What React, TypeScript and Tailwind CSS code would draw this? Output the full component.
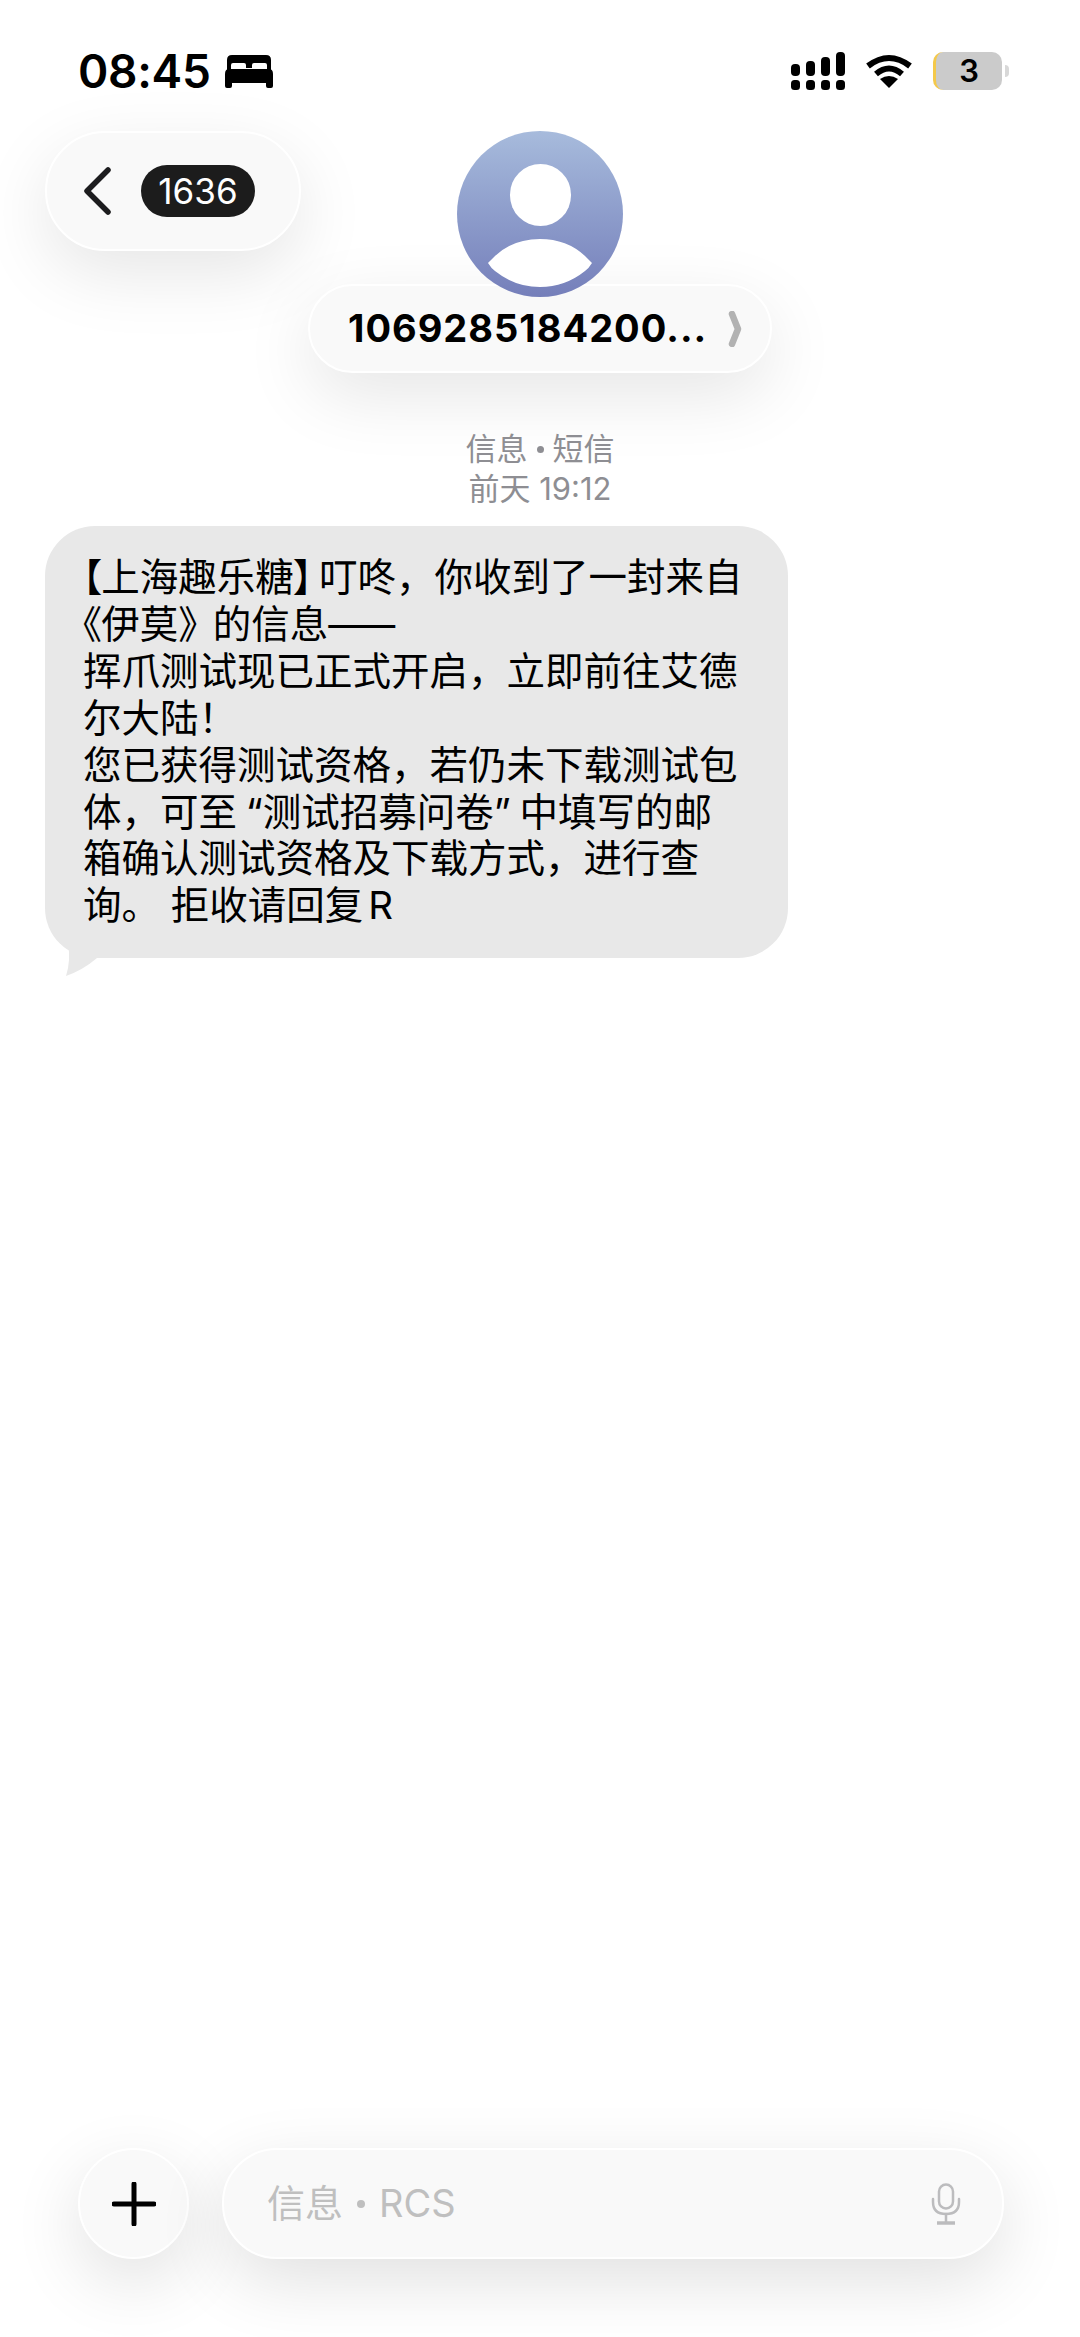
const latin = "font-['Inter','Noto_Sans_CJK_SC','Liberation_Sans',sans-serif]";
const cjk = "font-['Inter','Noto_Sans_CJK_SC',sans-serif]";
const palt = "[font-feature-settings:'palt']";

function Bed() {
  return (
    <svg width="48" height="33" viewBox="0 0 48 33" fill="black">
      <path fillRule="evenodd" d="M7 0H41Q46 0 46 5V15H42V10Q42 8 40 8H29Q27 8 27 10V13H21V10Q21 8 19 8H8Q6 8 6 10V15H2V5Q2 0 7 0Z" />
      <path d="M4 14H44Q48 14 48 19V31Q48 33 46 33H43Q41 33 41 31V28H7V31Q7 33 5 33H2Q0 33 0 31V19Q0 14 4 14Z" />
    </svg>
  );
}

function Signal() {
  return (
    <svg width="54" height="38" viewBox="0 0 54 38" fill="black">
      <rect x="0" y="12" width="9" height="12" rx="4" />
      <rect x="15" y="9" width="9" height="15" rx="4" />
      <rect x="30" y="5" width="9" height="19" rx="4" />
      <rect x="45" y="0" width="9" height="24" rx="4" />
      <rect x="0" y="28" width="9" height="10" rx="3.5" />
      <rect x="15" y="28" width="9" height="10" rx="3.5" />
      <rect x="30" y="28" width="9" height="10" rx="3.5" />
      <rect x="45" y="28" width="9" height="10" rx="3.5" />
    </svg>
  );
}

function Wifi() {
  return (
    <svg width="46" height="36" viewBox="0 0 46 36" fill="none" stroke="black" strokeWidth="6">
      <path d="M2 13Q23 -3 44 13" />
      <path d="M10 21Q23 10 36 21" />
      <path d="M23 35L14 26Q23 20 32 26Z" fill="black" stroke="none" />
    </svg>
  );
}

function Mic() {
  return (
    <svg width="30" height="42" viewBox="0 0 30 42" fill="none" stroke="#bcbcbe" strokeWidth="2.5" strokeLinecap="round">
      <rect x="8" y="1.5" width="14" height="24" rx="7" />
      <path d="M2 16V19Q2 31 15 31Q28 31 28 19V16" />
      <path d="M15 31V39" />
      <path d="M6 40H24" strokeWidth="3.5" strokeLinecap="butt" />
    </svg>
  );
}

function Line({ children, className = "" }: { children: React.ReactNode; className?: string }) {
  return <div className={`text-[38.5px] leading-[46.9px] whitespace-nowrap ${className}`}>{children}</div>;
}

export default function App() {
  return (
    <div className={`w-[1080px] h-[2337px] bg-white flex flex-col overflow-hidden text-black ${latin}`}>
      <div className="mt-[52px] h-[38px] pl-[78px] pr-[78px] flex items-center justify-between">
        <div className="flex items-center gap-[14px]">
          <span className="text-[46px] leading-[38px] font-semibold tracking-[-0.3px]">08:45</span>
          <Bed />
        </div>
        <div className="flex items-center">
          <Signal />
          <div className="ml-[21px]"><Wifi /></div>
          <div className="ml-[21px] relative w-[69px] h-[38px] rounded-[10px] bg-[#cbcbcb] border-l-[3px] border-[#f4c94a] flex items-center justify-center text-[31px] font-semibold">
            3
            <div className="absolute right-[-7px] top-[13px] w-[4px] h-[12px] rounded-r-[4px] bg-[#d8d8d8]" />
          </div>
        </div>
      </div>

      <div className="mt-[41px] grid grid-cols-[1fr_auto_1fr]">
        <div className="pl-[45px]">
          <div className="w-[256px] h-[120px] rounded-[60px] bg-[#f9f9f9] border-2 border-white shadow-[0_22px_70px_rgba(0,0,0,0.1)] flex items-center pl-[36px]">
            <svg width="30" height="48" viewBox="0 0 30 48" fill="none" stroke="#1c1c1e" strokeWidth="5.5" strokeLinecap="round" strokeLinejoin="round">
              <path d="M25 3L4 24L25 45" />
            </svg>
            <div className="ml-[28px] w-[114px] h-[52px] rounded-[26px] bg-[#1c1c1c] text-white text-[35px] flex items-center justify-center">1636</div>
          </div>
        </div>
        <div className="flex flex-col items-center">
          <div className="relative z-10 w-[166px] h-[166px] rounded-full bg-gradient-to-b from-[#a7bbdc] to-[#757fba] flex flex-col items-center overflow-hidden">
            <div className="mt-[33px] w-[61px] h-[62px] rounded-full bg-white" />
            <svg className="mt-[13px]" width="106" height="48" viewBox="0 0 106 48" fill="white">
              <path d="M1 24Q4 21 8 17Q26 0 53 0Q80 0 98 17Q102 21 105 24Q102 29 98 32Q78 48 53 48Q28 48 8 32Q4 29 1 24Z" />
            </svg>
          </div>
          <div className="-mt-[13px] w-[464px] h-[89px] rounded-[45px] bg-[#f9f9f9] border-2 border-white shadow-[0_22px_70px_rgba(0,0,0,0.1)] flex items-center pl-[38px]">
            <span className="w-[380px] text-[38px] font-bold tracking-[1px] whitespace-nowrap">1069285184200...</span>
            <svg width="14" height="36" viewBox="0 0 14 36" fill="none" stroke="#b2b2b2" strokeWidth="6.5" strokeLinecap="round" strokeLinejoin="round">
              <path d="M4 3L10 18L4 33" />
            </svg>
          </div>
        </div>
        <div />
      </div>

      <div className={`mt-[56px] flex flex-col items-center text-[31px] leading-[40px] text-[#8e8e93] ${cjk}`}>
        <span className="flex items-center">信息<span className="mx-[9px] w-[7px] h-[7px] rounded-full bg-[#8e8e93]" />短信</span>
        <span>前天 19:12</span>
      </div>

      <div className="mt-[17px] ml-[45px] relative w-[743px] pt-[28px] pb-[29px] pl-[38px] rounded-[50px] bg-[#e8e8e8]">
        <Line className="-ml-[1px]"><span className={palt}>【</span>上海趣乐糖<span className={`${palt} mr-[6px]`}>】</span>叮咚，你收到了一封来自</Line>
        <Line className="-ml-[1px]"><span className={palt}>《</span>伊莫<span className="tracking-[-4px]">》</span>的信息<span className="tracking-[-10px]">——</span></Line>
        <Line>挥爪测试现已正式开启，立即前往艾德</Line>
        <Line>尔大陆！</Line>
        <Line>您已获得测试资格，若仍未下载测试包</Line>
        <Line className="[word-spacing:-2px]">体，可至 “测试招募问卷” 中填写的邮</Line>
        <Line>箱确认测试资格及下载方式，进行查</Line>
        <Line>询。 拒收请回复<span className="ml-[5px]">R</span></Line>
        <svg className="absolute left-[20px] bottom-[-19px]" width="34" height="34" viewBox="0 0 34 34" fill="#e8e8e8">
          <path d="M3 0Q6 18 1 33Q18 27 32 15L20 0Z" />
        </svg>
      </div>

      <div className="flex-1" />

      <div className="mb-[78px] pl-[78px] flex items-center">
        <div className="w-[111px] h-[111px] rounded-full bg-[#f9f9f9] border-2 border-white shadow-[0_22px_70px_rgba(0,0,0,0.12)] flex items-center justify-center">
          <svg width="44" height="44" viewBox="0 0 44 44" stroke="black" strokeWidth="5" strokeLinecap="round">
            <path d="M22 2V42M2 22H42" />
          </svg>
        </div>
        <div className="ml-[33px] w-[782px] h-[111px] rounded-[55px] bg-[#f9f9f9] border-2 border-white shadow-[0_22px_70px_rgba(0,0,0,0.12)] flex items-center justify-between pl-[43px] pr-[41px]">
          <span className={`flex items-center text-[38px] text-[#bfbfbf] ${cjk}`}>信息<span className="mx-[14px] w-[8px] h-[8px] rounded-full bg-[#bfbfbf]" />RCS</span>
          <Mic />
        </div>
      </div>
    </div>
  );
}
